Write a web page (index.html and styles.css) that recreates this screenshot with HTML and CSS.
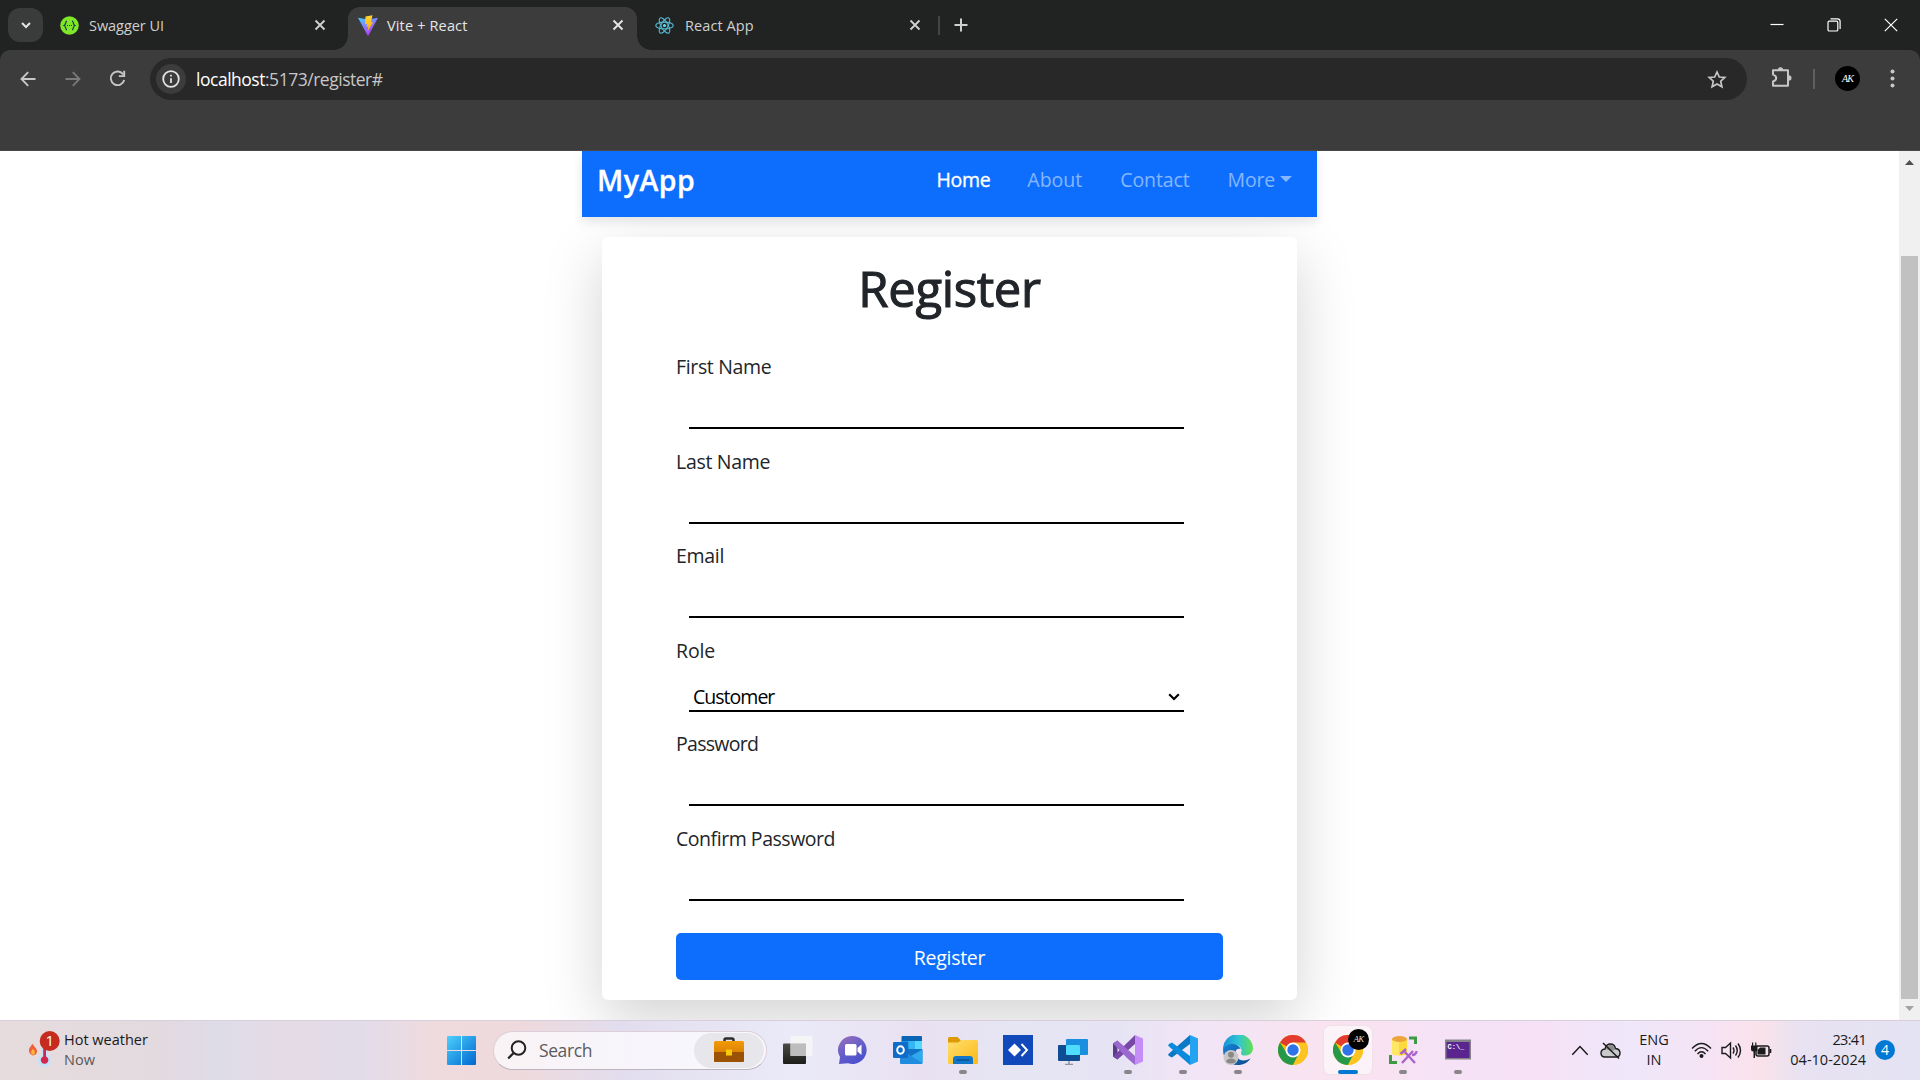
FILE: index.html
```html
<!DOCTYPE html>
<html lang="en">
<head>
<meta charset="utf-8">
<title>Vite + React</title>
<link rel="stylesheet" href="styles.css">
</head>
<body>
<svg width="0" height="0" class="defs">
  <defs>
    <linearGradient id="win" x1="0" y1="0" x2="1" y2="1"><stop offset="0" stop-color="#4cd0fb"/><stop offset="1" stop-color="#0067d1"/></linearGradient>
    <linearGradient id="viteA" x1="0" y1="0" x2=".6" y2="1"><stop offset="0" stop-color="#41d1ff"/><stop offset="1" stop-color="#bd34fe"/></linearGradient>
    <linearGradient id="viteB" x1="0" y1="0" x2="0" y2="1"><stop offset="0" stop-color="#ffd83a"/><stop offset="1" stop-color="#ffa800"/></linearGradient>
    <linearGradient id="chat" x1="0" y1="0" x2=".6" y2="1"><stop offset="0" stop-color="#a06fb5"/><stop offset=".5" stop-color="#6a61c8"/><stop offset="1" stop-color="#4a50cf"/></linearGradient>
    <linearGradient id="folder" x1="0" y1="0" x2="1" y2="1"><stop offset="0" stop-color="#ffdf70"/><stop offset="1" stop-color="#fcb914"/></linearGradient>
    <linearGradient id="bag" x1="0" y1="0" x2="0" y2="1"><stop offset="0" stop-color="#f39a08"/><stop offset="1" stop-color="#c96f02"/></linearGradient>
    <linearGradient id="edgeA" x1="0" y1="0" x2="1" y2="0"><stop offset="0" stop-color="#1a8fd8"/><stop offset=".5" stop-color="#2fc4d6"/><stop offset="1" stop-color="#63df52"/></linearGradient>
    <linearGradient id="edgeB" x1="0" y1="0" x2="1" y2="1"><stop offset="0" stop-color="#1583d8"/><stop offset="1" stop-color="#0c4a91"/></linearGradient>
    <linearGradient id="dark" x1="0" y1="0" x2="0" y2="1"><stop offset="0" stop-color="#4a4a46"/><stop offset="1" stop-color="#1c1c1a"/></linearGradient>
    <symbol id="chrome" viewBox="0 0 30 30">
      <circle cx="15" cy="15" r="15" fill="#fbbc04"/>
      <path d="M15 15 L2 7.5 A15 15 0 0 1 28 7.5 Z" fill="#e33b2e"/>
      <path d="M2 7.5 A15 15 0 0 0 15 30 L21.1 18.5 L15 15 L8.9 18.5 Z" fill="#279847"/>
      <path d="M28 7.5 H15 V15 L21.1 18.5 L15 30 A15 15 0 0 0 28 7.5Z" fill="#fcc421"/>
      <circle cx="15" cy="15" r="7.5" fill="#fff"/><circle cx="15" cy="15" r="5.7" fill="#2f73e8"/>
    </symbol>
    <symbol id="x" viewBox="0 0 12 12"><path d="M1.5 1.5 L10.5 10.5 M10.5 1.5 L1.5 10.5" fill="none" stroke="currentColor" stroke-width="1.9"/></symbol>
  </defs>
</svg>

<header class="browser">
  <div class="tabstrip">
    <button class="tab-search"><svg width="12" height="12" viewBox="0 0 12 12"><path d="M2 4 L6 8 L10 4" fill="none" stroke="#e3e3e3" stroke-width="2"/></svg></button>
    <div class="tab tab-swagger">
      <svg class="favicon" width="19" height="19" viewBox="0 0 19 19"><circle cx="9.5" cy="9.5" r="9.3" fill="#7fe628"/><path d="M7 5.2 C5.2 5.2 6.1 8.8 4.2 9.5 C6.1 10.2 5.2 13.8 7 13.8 M12 5.2 C13.8 5.2 12.900 8.8 14.800 9.5 C12.900 10.2 13.8 13.8 12 13.8" fill="none" stroke="#173647" stroke-width="1.2"/><path d="M7 9.500h1M9 9.500h1M11 9.500h1" stroke="#173647" stroke-width="1.1"/></svg>
      <span class="tab-title t-swagger">Swagger UI</span>
      <svg class="tab-close" width="12" height="12"><use href="#x"/></svg>
    </div>
    <div class="tab tab-active">
      <svg class="favicon" width="20" height="21" viewBox="0 0 20 21"><path d="M0 2.8 L10 4.6 L20 2.8 L10.4 20.4 Q10 21 9.6 20.4Z" fill="url(#viteA)"/><path d="M14.5 .3 L7.5 1.6 L7 9.3 L9.2 8.9 L8.6 12 L10.3 11.6 L9.5 16.5 L15.2 7 L12.8 7.4Z" fill="url(#viteB)"/></svg>
      <span class="tab-title t-vite">Vite + React</span>
      <svg class="tab-close" width="12" height="12"><use href="#x"/></svg>
    </div>
    <div class="tab tab-react">
      <svg class="favicon" width="19" height="19" viewBox="-10 -10 20 20"><g fill="none" stroke="#53b8d2" stroke-width="1.2"><ellipse rx="9.2" ry="3.6"/><ellipse rx="9.2" ry="3.6" transform="rotate(60)"/><ellipse rx="9.2" ry="3.6" transform="rotate(120)"/></g><circle r="1.7" fill="#61dafb"/></svg>
      <span class="tab-title t-react">React App</span>
      <svg class="tab-close" width="12" height="12"><use href="#x"/></svg>
    </div>
    <span class="tab-sep"></span>
    <svg class="new-tab" width="14" height="14" viewBox="0 0 14 14"><path d="M7 .5V13.5M.5 7H13.5" stroke="#d0d0d0" stroke-width="2"/></svg>
    <div class="window-buttons">
      <svg width="14" height="14" viewBox="0 0 14 14"><path d="M.5 6.5H13.5" stroke="#fff" stroke-width="1.2"/></svg>
      <svg width="14" height="14" viewBox="0 0 14 14"><path d="M3.5 .9H10.5A2.6 2.6 0 0 1 13.1 3.5V11" fill="none" stroke="#fff" stroke-width="1.2"/><rect x="1" y="3.2" width="9.8" height="9.8" rx="1.3" fill="none" stroke="#fff" stroke-width="1.2"/></svg>
      <svg width="14" height="14" viewBox="0 0 14 14"><path d="M.8 .8L13.2 13.2M13.2 .8L.8 13.2" stroke="#fff" stroke-width="1.2"/></svg>
    </div>
  </div>
  <div class="toolbar">
    <svg class="ic-back" width="16" height="16" viewBox="0 0 16 16"><path d="M15.5 8H1.8M8.2 1.2L1.5 8L8.2 14.8" fill="none" stroke="#c7c7c7" stroke-width="1.9"/></svg>
    <svg class="ic-forward" width="16" height="16" viewBox="0 0 16 16"><path d="M.5 8H14.2M7.8 1.2L14.5 8L7.8 14.8" fill="none" stroke="#7b7b7b" stroke-width="1.8"/></svg>
    <svg class="ic-reload" width="17" height="17" viewBox="0 0 17 17"><path d="M14.3 4.6A6.8 6.8 0 1 0 15.2 10" fill="none" stroke="#c7c7c7" stroke-width="1.9"/><path d="M15.2 .8V6.1H9.8" fill="none" stroke="#c7c7c7" stroke-width="1.9"/></svg>
    <div class="omnibox">
      <span class="site-info"><svg width="18" height="18" viewBox="0 0 18 18"><circle cx="9" cy="9" r="7.8" fill="none" stroke="#e3e3e3" stroke-width="1.8"/><path d="M9 8.2V13M9 4.8V6.6" stroke="#e3e3e3" stroke-width="1.8"/></svg></span>
      <span class="url"><span class="host">localhost</span>:5173/register#</span>
      <svg class="star" width="20" height="19" viewBox="0 0 20 19"><path d="M10 2L12.3 7L17.8 7.5L13.7 11.2L14.9 16.8L10 13.9L5.1 16.8L6.3 11.2L2.2 7.5L7.7 7Z" fill="none" stroke="#c7c7c7" stroke-width="1.7"/></svg>
    </div>
    <svg class="ic-ext" width="21" height="21" viewBox="0 0 21 21"><path d="M2 3.2H17V18.7H2V14.5Q5.2 13.5 5.2 11Q5.2 8.5 2 7.6Z" fill="none" stroke="#c7c7c7" stroke-width="2" stroke-linejoin="round"/><path d="M6.8 3A2.7 2.7 0 0 1 12.2 3ZM17.8 8.3A2.7 2.7 0 0 1 17.8 13.7Z" fill="#c7c7c7"/></svg>
    <span class="bar-sep"></span>
    <span class="avatar">AK</span>
    <svg class="ic-dots" width="5" height="19" viewBox="0 0 5 19"><g fill="#c7c7c7"><circle cx="2.5" cy="2.5" r="2"/><circle cx="2.5" cy="9.5" r="2"/><circle cx="2.5" cy="16.5" r="2"/></g></svg>
  </div>
</header>

<main class="viewport">
  <div class="page">
    <div class="container">
      <nav class="navbar">
        <a class="brand">MyApp</a>
        <a class="nav-link nav-active">Home</a>
        <a class="nav-link n-about">About</a>
        <a class="nav-link n-contact">Contact</a>
        <a class="nav-link n-more">More<span class="caret"></span></a>
      </nav>
      <section class="card">
        <h1>Register</h1>
        <form class="form">
          <div class="field"><label class="l-first">First Name</label><input type="text"></div>
          <div class="field"><label class="l-last">Last Name</label><input type="text"></div>
          <div class="field"><label class="l-email">Email</label><input type="text"></div>
          <div class="field"><label class="l-role">Role</label>
            <div class="select"><span>Customer</span><svg width="12" height="8" viewBox="0 0 12 8"><path d="M1.2 1.2L6 6L10.8 1.2" fill="none" stroke="#000" stroke-width="2.2"/></svg></div></div>
          <div class="field"><label class="l-pass">Password</label><input type="password"></div>
          <div class="field"><label class="l-confirm">Confirm Password</label><input type="password"></div>
        </form>
        <button class="submit" type="button">Register</button>
      </section>
    </div>
  </div>
  <div class="scrollbar">
    <svg width="9" height="5" viewBox="0 0 9 5"><path d="M0 5L4.5 0L9 5Z" fill="#505050"/></svg>
    <span class="thumb"></span>
    <svg width="9" height="5" viewBox="0 0 9 5"><path d="M0 0L4.5 5L9 0Z" fill="#a3a3a3"/></svg>
  </div>
</main>

<footer class="taskbar">
  <div class="weather">
    <svg width="34" height="38" viewBox="0 0 34 38">
      <path d="M4.5 24.5C-.5 22 .5 17.500 3 15C3.500 13.500 4.500 13 5 13C5.200 15 8.500 17 9 19.500C9.500 23 7 24.500 4.500 24.500Z" fill="#f0603a"/><path d="M5 23.800C2.500 23.500 2.500 20 5 18C7.500 20 7.500 23.500 5 23.800Z" fill="#fdb63a"/>
      <path d="M13 12H20V24A6.500 6.500 0 1 1 13 24Z" fill="#c3e2fa"/><path d="M15.200 12H18V25.500A3.800 3.800 0 1 1 15.200 25.500Z" fill="#d3264f"/>
      <circle cx="21.700" cy="10" r="10" fill="#c52b1e"/><text x="21.700" y="15" text-anchor="middle" class="badge-text">1</text>
    </svg>
    <div class="weather-text"><span class="w1">Hot weather</span><span class="w2">Now</span></div>
  </div>
  <svg class="start" width="29" height="29" viewBox="0 0 29 29"><g fill="url(#win)"><path d="M1 0H14V14H0V1Q0 0 1 0ZM15 0H28Q29 0 29 1V14H15ZM0 15H14V29H1Q0 29 0 28ZM15 15H29V28Q29 29 28 29H15Z" /></g></svg>
  <div class="search">
    <svg width="20" height="20" viewBox="0 0 20 20"><circle cx="11.500" cy="8" r="6.800" fill="none" stroke="#222" stroke-width="2"/><path d="M6.600 13L1.200 18.500" stroke="#222" stroke-width="2.300"/></svg>
    <span class="search-label">Search</span>
    <span class="search-pill"><svg width="30" height="26" viewBox="0 0 30 26"><path d="M10.500 5V3Q10.500 1.500 12 1.500H18Q19.500 1.500 19.500 3V5" fill="none" stroke="#2c2c2c" stroke-width="2.500"/><rect y="4" width="30" height="21" rx="1.500" fill="url(#bag)"/><path d="M0 15H30V23.500Q30 25 28.500 25H1.500Q0 25 0 23.500Z" fill="#9c5204"/><rect x="12" y="12.500" width="6" height="6" fill="#f8c90b"/></svg></span>
  </div>
  <div class="apps">
    <span class="app"><svg width="30" height="30" viewBox="0 0 30 30"><rect y="8.500" width="23" height="20.500" rx="1" fill="url(#dark)"/><rect x="7.500" y="1" width="22" height="20" rx="1" fill="#f7f7f7" fill-opacity=".85"/><rect x="7.500" y="8.500" width="15.500" height="12.500" fill="#bdbdbd"/></svg></span>
    <span class="app"><svg width="30" height="30" viewBox="0 0 30 30"><path d="M15 1A14.200 14 0 1 1 10 28.300L1 29L2 22A14.200 14 0 0 1 15 1Z" fill="url(#chat)"/><rect x="7" y="9" width="11.500" height="11.500" rx="1.500" fill="#fff"/><path d="M19.500 13L23.500 9.500V20L19.500 16.500Z" fill="#fff"/></svg></span>
    <span class="app"><svg width="30" height="30" viewBox="0 0 30 30"><rect x="8.500" y="1" width="20.500" height="15" rx="1" fill="#0a64b4"/><path d="M9 6H15.500V17H9ZM15.500 6H22V12H15.500Z" fill="#1a93e0"/><path d="M15.500 6H22V14H15.500Z" fill="#35b6f2"/><path d="M22 6H29V15H22Z" fill="#55d8ff"/><path d="M9 14H29V18L18 22Z" fill="#1272c4"/><path d="M7 15L18 21L29.500 14.500V28Q29.500 29 28.500 29H8Q7 29 7 28Z" fill="#1f8ce0"/><path d="M18 21L29.500 14.500V28Z" fill="#2fa8ee"/><rect y="7" width="15" height="16" rx="1.300" fill="#0f6cc8"/><ellipse cx="7.500" cy="15" rx="3.300" ry="3.800" fill="none" stroke="#fff" stroke-width="2"/></svg></span>
    <span class="app running"><svg width="30" height="30" viewBox="0 0 30 30"><path d="M0 8V3.500Q0 2 1.500 2H9.500L13 5.500V8Z" fill="#dc9b05"/><path d="M0 7.500H10L13.500 5H28.500Q30 5 30 6.500V27.500Q30 29 28.500 29H1.500Q0 29 0 27.500Z" fill="url(#folder)"/><path d="M5 29V24Q5 21 8 21H22Q25 21 25 24V29Z" fill="#1377c9"/><path d="M8.500 25H21.500" stroke="#0b4f93" stroke-width="1.500"/></svg></span>
    <span class="app"><svg width="30" height="30" viewBox="0 0 30 30"><rect width="30" height="30" fill="#1249ba"/><path d="M18.500 9L24 15L18.500 21" fill="none" stroke="#fff" stroke-width="1.900"/><path d="M5 15L11.500 8.500L18 15L11.500 21.500Z" fill="#fff"/></svg></span>
    <span class="app"><svg width="30" height="30" viewBox="0 0 30 30"><rect x="8" y="4" width="22" height="16" rx="1" fill="#1a8fe0"/><rect y="10" width="22" height="16" rx="1" fill="#0e4d93"/><rect x="8" y="10" width="14" height="10" rx="1" fill="#4fdcff"/><path d="M11 26V29.500M7 29.500H15" stroke="#8e9499" stroke-width="1.500"/></svg></span>
    <span class="app running"><svg width="30" height="30" viewBox="0 0 30 30"><path d="M0 8.500L4.500 5.500V24.500L0 21.500Z" fill="#5c3a88"/><path d="M4.500 24.500L0 21.500L16 6L22 0V9Z" fill="#7748a8"/><path d="M22 0L30 3.500V26.500L22 30Z" fill="#c58df6"/><path d="M0 8.500L4.500 5.500L22 21V30L14 23Z" fill="#9a68cf"/></svg></span>
    <span class="app running"><svg width="30" height="30" viewBox="0 0 30 30"><path d="M22 0L30 3.500V26.500L22 30Z" fill="#23a3f2"/><path d="M22 0V9L4 22.500L1 21Q-.5 19.500 1 18.500Z" fill="#0a78c4"/><path d="M22 30V21L4 7.500L1 9Q-.5 10.500 1 11.500Z" fill="#0c8bdc"/></svg></span>
    <span class="app running"><svg width="30" height="30" viewBox="0 0 30 30"><path d="M0 15A15 15 0 0 1 30 13C30 18 26.500 20.500 22 20.500C18 20.500 17.500 18.500 18.500 16.500C19 13 16 9.500 11 9.500C6 9.500 1.500 12 0 15Z" fill="url(#edgeA)"/><path d="M0 15C1.500 11 6 8.500 10.500 9C14.500 9.500 17 12 17.500 14C13.500 12.500 11 17 13 21C15.500 25.500 21 27 27.500 23.500C23 31 12 32 6 27Q0 22.500 0 15Z" fill="url(#edgeB)"/><circle cx="8" cy="22.500" r="7.500" fill="#c9c7c6"/><circle cx="8" cy="19.800" r="3" fill="#8b8988"/><path d="M3 27Q3.500 23.500 8 23.500Q12.500 23.500 13 27Q8 30 3 27Z" fill="#8b8988"/></svg></span>
    <span class="app"><svg width="30" height="30"><use href="#chrome"/></svg></span>
    <span class="app current"><svg width="30" height="30"><use href="#chrome"/></svg><span class="profile">AK</span></span>
    <span class="app running"><svg width="30" height="30" viewBox="0 0 30 30"><path d="M4 4V18Q4 20.500 12 20.500Q19 20.500 19 18V4Z" fill="#fcd93c"/><path d="M11 6V20.500Q4 20.500 4 18V4Z" fill="#ffe766"/><ellipse cx="11.500" cy="4" rx="7.500" ry="3" fill="#eda43b"/><path d="M21 3H27.500V9M2.500 20V27.500H9" fill="none" stroke="#3d9a44" stroke-width="3"/><path d="M14 28L25 16M16 16L27 28M12.500 19L18 14M24 20A4 4 0 0 0 28.500 16" fill="none" stroke="#a964cc" stroke-width="2.400"/></svg></span>
    <span class="app running"><svg width="28" height="30" viewBox="0 0 28 30"><rect x="1" y="4.500" width="26" height="20" fill="#858389"/><rect x="2.500" y="7" width="23" height="16" fill="#5b2590"/><text x="3.500" y="14" class="cmd">C:\_</text></svg></span>
  </div>
  <div class="tray">
    <svg class="t-chev" width="18" height="11" viewBox="0 0 18 11"><path d="M1.300 9.800L9 1.500L16.700 9.800" fill="none" stroke="#1b1b1b" stroke-width="1.500"/></svg>
    <svg class="t-cloud" width="21" height="17" viewBox="0 0 21 17"><path d="M5 15Q1 15 1 11Q1 7.500 5 7Q6 2 10.500 2Q14.500 2 15.500 6.500Q20 7 20 11Q20 15 16 15Z" fill="#c9c9c9" stroke="#1b1b1b" stroke-width="1.400"/><path d="M6 7Q7 3 10.500 3Q14 3 15 8L11 9Z" fill="#8c8c8c"/><path d="M3 1L19 16.500" stroke="#1b1b1b" stroke-width="1.500"/></svg>
    <div class="lang"><span>ENG</span><span>IN</span></div>
    <svg class="t-wifi" width="21" height="17" viewBox="0 0 21 17"><g fill="none" stroke="#1b1b1b" stroke-width="1.400"><path d="M1 6.500Q10.500 -3.500 20 6.500M3.800 9.300Q10.500 2 17.200 9.300M6.500 12Q10.500 7.600 14.500 12"/></g><circle cx="10.500" cy="14" r="2" fill="#1b1b1b"/></svg>
    <svg class="t-vol" width="21" height="19" viewBox="0 0 21 19"><g fill="none" stroke="#1b1b1b" stroke-width="1.400"><path d="M1 6.500H4.500L9.500 2V17L4.500 12.500H1Z"/><path d="M12 6.500Q14 9.500 12 12.500M14.500 4.500Q18 9.500 14.500 14.500M17 2.500Q22 9.500 17 16.500"/></g></svg>
    <svg class="t-bat" width="21" height="17" viewBox="0 0 21 17"><rect x="5" y="4" width="13" height="10" rx="2" fill="none" stroke="#1b1b1b" stroke-width="1.500"/><path d="M6.500 8L9 5.500H14.500V12.500H6.500ZM18.500 7H20.300V11H18.500ZM0 3.500H6.500V7Q6.500 9.500 4 9.500V16H2.500V9.500Q0 9.500 0 7ZM1 .5H2.200V4H1ZM4.200 .5H5.400V4H4.200Z" fill="#1b1b1b"/></svg>
    <div class="clock"><span class="c-time">23:41</span><span class="c-date">04-10-2024</span></div>
    <span class="notif">4</span>
  </div>
</footer>
</body>
</html>
```
FILE: styles.css
```css
* { box-sizing: border-box; }
body {
  margin: 0;
  width: 1920px;
  height: 1080px;
  overflow: hidden;
  display: flex;
  flex-direction: column;
  font-family: "Open Sans", "Noto Sans", sans-serif;
  background: #fff;
}
svg { display: block; flex: none; }
.defs { position: absolute; }

/* Browser chrome */
.browser { height: 151px; background: #202322; }
.tabstrip { height: 50px; display: flex; align-items: center; }
.tab-search {
  width: 35px; height: 34px; margin-left: 8px; padding: 0;
  border: 0; border-radius: 12px; background: #3a3b3b;
  display: flex; align-items: center; justify-content: center;
}
.tab { height: 50px; display: flex; align-items: center; color: #cfcfcf; }
.tab-title { flex: 1; font-size: 14.5px; line-height: 20px; white-space: nowrap; padding: 2px 0 0 10px; }
.tab-swagger { width: 305px; padding: 0 22px 0 17px; }
.tab-active {
  position: relative;
  width: 289px; height: 43px; align-self: flex-end;
  padding: 0 13px 7px 10px;
  border-radius: 12px 12px 0 0;
  background: #3c3c3c; color: #e6e6e6;
}
.tab-active .tab-title { padding-left: 9px; }
.tab-active::before, .tab-active::after {
  content: ""; position: absolute; bottom: 0; width: 14px; height: 14px;
}
.tab-active::before { left: -14px; background: radial-gradient(circle at 0 0, transparent 13.5px, #3c3c3c 14px); }
.tab-active::after { right: -14px; background: radial-gradient(circle at 100% 0, transparent 13.5px, #3c3c3c 14px); }
.tab-react { width: 302px; padding: 0 18px 0 18px; }
.t-swagger { letter-spacing: -0.05px; }
.t-vite { letter-spacing: 0.15px; }
.t-react { letter-spacing: 0.08px; padding-left: 11px; }
.tab-sep { width: 2px; height: 19px; margin: 0 14px 0 -1px; background: #444; }
.window-buttons { margin: -1px 22px 0 auto; display: flex; gap: 43px; }
.toolbar {
  height: 101px; padding-top: 8px;
  display: flex; align-items: flex-start;
  background: #3c3c3c; border-radius: 10px 10px 0 0;
  border-bottom: 1px solid #4a4848;
}
.ic-back { margin: 13px 0 0 20px; }
.ic-forward { margin: 13px 0 0 29px; }
.ic-reload { margin: 12px 0 0 28px; }
.omnibox {
  width: 1597px; height: 42px; margin-left: 24px; padding: 0 20px 0 6px;
  display: flex; align-items: center;
  border-radius: 21px; background: #282828;
}
.site-info {
  width: 30px; height: 30px; border-radius: 50%; background: #3c3c3c;
  display: flex; align-items: center; justify-content: center;
}
.url { flex: 1; padding-left: 10px; font-size: 17.5px; line-height: 24px; letter-spacing: -0.48px; color: #c7c7c7; }
.host { color: #fff; }
.ic-ext { margin: 9px 0 0 24px; }
.bar-sep { width: 2px; height: 20px; margin: 11px 0 0 21px; background: #5f5f5f; }
.avatar {
  width: 25px; height: 25px; margin: 8px 0 0 20px;
  border-radius: 50%; background: #000; color: #fff;
  font: italic 10px/25px "Liberation Serif", serif; letter-spacing: -0.8px; text-align: center;
}
.ic-dots { margin: 11px 0 0 30px; }

/* Page */
.viewport { height: 869px; display: flex; background: #fff; }
.page { width: 1899px; height: 869px; overflow: hidden; }
.container { width: 735px; margin: 0 auto; }
.navbar {
  position: relative; z-index: 1;
  height: 66px; padding: 0 25px 8px 15px;
  display: flex; align-items: center;
  background: #0d6efd;
  box-shadow: 0 5px 10px rgba(0, 0, 0, 0.1);
}
.brand { margin-right: auto; font-size: 28.5px; font-weight: 600; letter-spacing: 0.5px; line-height: 44px; color: #fff; -webkit-text-stroke: 0.3px #fff; }
.nav-link { margin-left: 37px; font-size: 19.5px; line-height: 30px; color: rgba(255, 255, 255, 0.5); }
.nav-active { color: #fff; letter-spacing: -0.3px; -webkit-text-stroke: 0.35px #fff; }
.n-about { letter-spacing: 0; }
.n-contact { margin-left: 38px; letter-spacing: -0.1px; }
.n-more { margin-left: 38px; letter-spacing: -0.2px; }
.caret {
  display: inline-block; margin-left: 5px; vertical-align: 5px;
  border-top: 6px solid; border-left: 6px solid transparent; border-right: 6px solid transparent;
}
.card {
  width: 695px; height: 763px; margin: 20px auto 0; padding: 0 74px;
  border-radius: 6px; background: #fff;
  box-shadow: 0 20px 60px rgba(0, 0, 0, 0.175);
}
.card h1 {
  margin: 0; height: 97px; padding-top: 21px;
  font-size: 49px; font-weight: 400; letter-spacing: -0.35px; line-height: 60px;
  text-align: center; color: #212529; -webkit-text-stroke: 1.1px #212529;
}
.form { display: grid; grid-template-rows: 95px 95px 94px 94px 94px 95px; }
.field { display: flex; flex-direction: column; justify-content: flex-end; }
.field label { padding-top: 1px; font-size: 19.5px; line-height: 30px; letter-spacing: -0.2px; color: #212529; }
.field .l-first { letter-spacing: -0.35px; }
.field .l-last { letter-spacing: -0.3px; }
.field .l-email { letter-spacing: -0.3px; }
.field .l-role { padding-top: 2px; letter-spacing: -0.15px; }
.field .l-pass { letter-spacing: -0.72px; }
.field .l-confirm { letter-spacing: -0.46px; }
.field input, .select {
  width: 495px; height: 47px; margin: 0 0 0 13px; padding: 0 5px;
  border: 0; border-bottom: 2px solid #000; background: none; outline: 0;
}
.field .select { height: 46px; padding: 0 4px; }
.select { display: flex; align-items: flex-end; justify-content: space-between; color: #000; }
.select span { font-size: 19.5px; line-height: 27px; letter-spacing: -0.98px; }
.select svg { margin-bottom: 9px; }
.submit {
  width: 547px; height: 47px; margin: 32px 0 0; padding: 2px 0 0;
  border: 0; border-radius: 5px; background: #0d6efd;
  font: 19.5px "Open Sans", sans-serif; letter-spacing: -0.3px; color: #fff;
}
.scrollbar { width: 21px; display: flex; flex-direction: column; align-items: center; padding: 9px 0 9px; background: #f0f0f0; }
.thumb { width: 17px; height: 743px; margin: 91px 0 7px; background: #c1c1c1; }

/* Taskbar */
.taskbar {
  height: 60px; display: flex; align-items: center;
  border-top: 1px solid #d9cfdc;
  background: linear-gradient(90deg, #e6dcdd 0, #e3dae0 160px, #dedce9 220px, #e5dbe5 290px, #e2dcea 360px, #eedbde 430px, #eed9dc 520px, #e2ddee 620px, #eaeaf8 790px, #e9e1f1 920px, #e6e5f3 1010px, #e6e4f4 1120px, #f2e5f6 1200px, #fae3ef 1340px, #f5e2f7 1450px, #f6e1f6 1540px, #efe7fa 1630px, #f5e3f5 1710px, #fae2ea 1760px, #e8e2f2 1800px, #e4e3f3 1920px);
}
.weather { width: 419px; padding-left: 28px; display: flex; align-items: center; }
.weather svg { margin-top: -2px; }
.weather-text { display: flex; flex-direction: column; padding: 0 0 1px 2px; font-size: 14.5px; line-height: 20px; color: #191919; }
.w2 { color: #5c5759; }
.badge-text { font: 15px "Open Sans", sans-serif; fill: #fff; }
.start { margin-left: 28px; }
.search {
  width: 274px; height: 39px; margin: -1px 0 0 17px; padding: 0 2px 0 13px;
  display: flex; align-items: center;
  border: 1px solid #dccfd9; border-bottom-color: #bdb4bf; border-radius: 20px;
  background: linear-gradient(90deg, #f9f3f4, #f7f5fb 50%, #f8f8fd);
}
.search-label { padding-left: 12px; font-size: 17.5px; line-height: 24px; letter-spacing: -0.4px; color: #5b5b5b; }
.search-pill {
  width: 70px; height: 35px; margin-left: auto; border-radius: 18px; background: #e7e6ea;
  display: flex; align-items: center; justify-content: center;
}
.apps { margin: -1px 0 0 3px; display: flex; }
.app { position: relative; width: 55px; height: 48px; display: flex; align-items: center; justify-content: center; }
.running::after, .current::after {
  content: ""; position: absolute; bottom: 0; width: 8px; height: 4px; border-radius: 2px; background: #8a858b;
}
.current { width: 48px; margin: 0 3px 0 4px; border-radius: 6px; background: #fcf3f9; box-shadow: 0 0 1px 1px #f0e0ea; }
.current::after { width: 20px; background: #0078d4; }
.profile {
  position: absolute; left: 24px; top: 3px; width: 21px; height: 21px;
  border-radius: 50%; background: #000; color: #ddd;
  font: italic 9px/21px "Liberation Serif", serif; letter-spacing: -0.8px; text-align: center;
}
.cmd { font: bold 7px "Liberation Mono", monospace; fill: #fff; }
.tray { margin: -1px 0 0 auto; padding-right: 25px; display: flex; align-items: center; color: #1b1b1b; font-size: 14.5px; line-height: 20px; }
.t-cloud { margin-left: 11px; }
.lang { width: 40px; margin-left: 13px; display: flex; flex-direction: column; align-items: center; }
.t-wifi { margin-left: 17px; }
.t-vol { margin-left: 9px; }
.t-bat { margin-left: 9px; }
.clock { width: 94px; display: flex; flex-direction: column; align-items: flex-end; }
.c-time { letter-spacing: -0.7px; }
.notif {
  width: 20px; height: 20px; margin-left: 9px; border-radius: 50%;
  background: #0078d4; color: #fff; font-size: 14px; text-align: center;
}
```
